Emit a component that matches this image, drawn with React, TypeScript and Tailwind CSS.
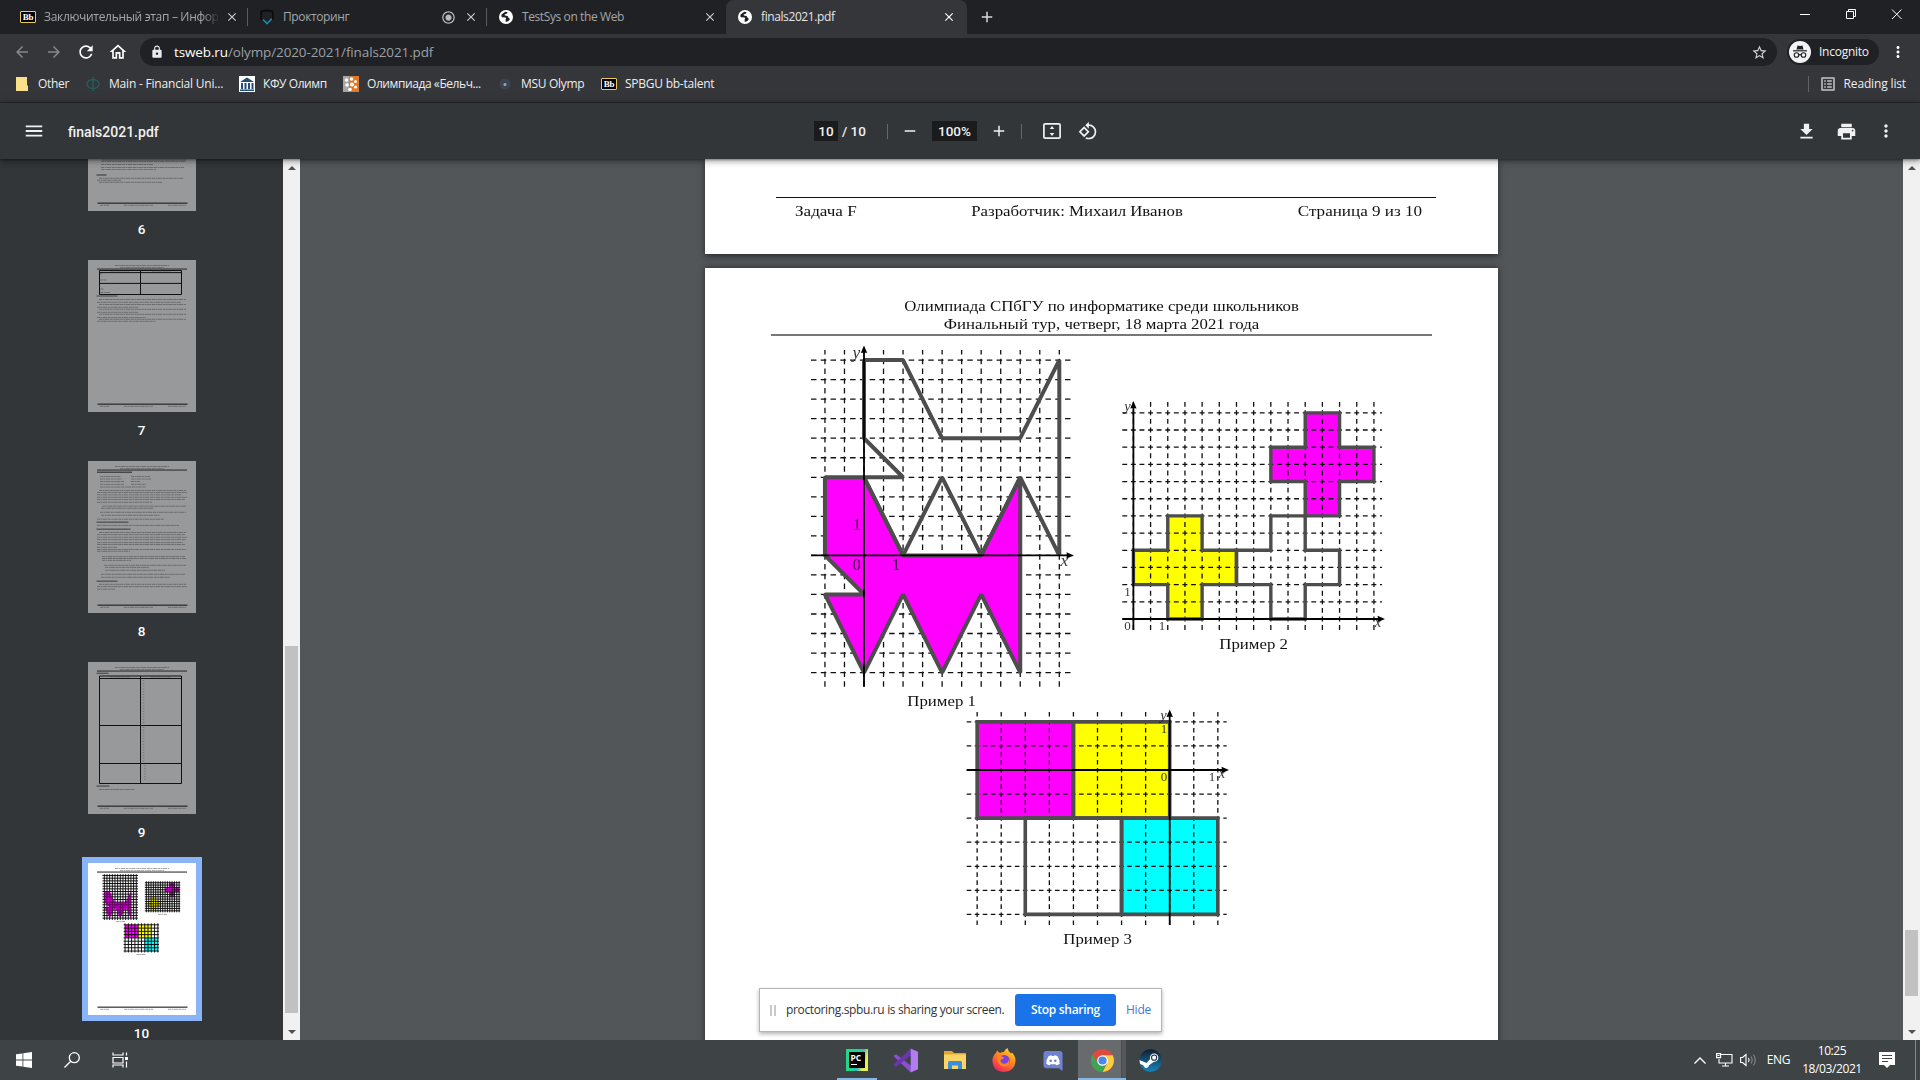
import React from "react";
import {
  MdAdd,
  MdArrowBack,
  MdArrowForward,
  MdClose,
  MdFileDownload,
  MdLock,
  MdMenu,
  MdMoreVert,
  MdOutlineHome,
  MdOutlineListAlt,
  MdPrint,
  MdRadioButtonChecked,
  MdRefresh,
  MdRemove,
  MdRotate90DegreesCcw,
  MdStarBorder,
} from "react-icons/md";

const UI = "font-['Open_Sans','Noto_Sans',sans-serif]";
const ROBOTO = "font-['Roboto',sans-serif]";
const SERIF = "font-['Liberation_Serif',serif]";

/* ---------- figures ---------- */

type Pt = [number, number];
type Shape = { pts: Pt[]; fill?: string };
type Label = { t: string; x: number; y: number; italic?: boolean };
type Fig = {
  ox: number;
  oy: number;
  g: number;
  nx: [number, number];
  ny: [number, number];
  ext: [number, number, number, number];
  arrow: [number, number];
  stroke: number;
  dash: string;
  gridOnTop: boolean;
  font: number;
  shapes: Shape[];
  labels: Label[];
};

const rect = (x1: number, y1: number, x2: number, y2: number): Pt[] => [[x1, y1], [x2, y1], [x2, y2], [x1, y2]];
const cross = (x: number, y: number): Pt[] => [
  [x + 2, y + 6], [x + 4, y + 6], [x + 4, y + 4], [x + 6, y + 4], [x + 6, y + 2], [x + 4, y + 2],
  [x + 4, y], [x + 2, y], [x + 2, y + 2], [x, y + 2], [x, y + 4], [x + 2, y + 4],
];

const FIG1: Fig = {
  ox: 864, oy: 555.4, g: 19.53, nx: [-2, 10], ny: [-6, 10],
  ext: [811, 350, 1071.7, 686.7], arrow: [1074, 345.5], stroke: 4, dash: "5.5 4.27", gridOnTop: false, font: 16,
  shapes: [
    { pts: [[0, 10], [2, 10], [4, 6], [8, 6], [10, 10], [10, 0], [8, 4], [6, 0], [4, 4], [2, 0], [0, 4], [2, 4], [0, 6]] },
    { fill: "#ff00ff", pts: [[-2, 4], [0, 4], [2, 0], [6, 0], [8, 4], [8, -6], [6, -2], [4, -6], [2, -2], [0, -6], [-2, -2], [0, -2], [-2, 0]] },
  ],
  labels: [
    { t: "y", x: 856.5, y: 358, italic: true }, { t: "x", x: 1064.5, y: 565.5, italic: true },
    { t: "0", x: 856.8, y: 569.5 }, { t: "1", x: 896, y: 569.5 }, { t: "1", x: 857, y: 530 },
  ],
};

const FIG2: Fig = {
  ox: 1133.4, oy: 619, g: 17.18, nx: [0, 14], ny: [0, 12],
  ext: [1122.3, 402, 1382, 630], arrow: [1385, 401], stroke: 3.4, dash: "4.9 3.69", gridOnTop: true, font: 13,
  shapes: [
    { pts: cross(6, 0) },
    { fill: "#ff00ff", pts: cross(8, 6) },
    { fill: "#ffff00", pts: cross(0, 0) },
  ],
  labels: [
    { t: "y", x: 1127.5, y: 410.5, italic: true }, { t: "x", x: 1378, y: 627, italic: true },
    { t: "0", x: 1127.6, y: 630 }, { t: "1", x: 1162, y: 630 }, { t: "1", x: 1127.5, y: 595.5 },
  ],
};

const FIG3: Fig = {
  ox: 1169.7, oy: 770, g: 24.07, nx: [-8, 2], ny: [-6, 2],
  ext: [966.7, 711, 1226.7, 925], arrow: [1229, 709.5], stroke: 3.6, dash: "4.6 3.42", gridOnTop: true, font: 13,
  shapes: [
    { pts: rect(-6, -2, -2, -6) },
    { fill: "#ff00ff", pts: rect(-8, 2, -4, -2) },
    { fill: "#ffff00", pts: rect(-4, 2, 0, -2) },
    { fill: "#00ffff", pts: rect(-2, -2, 2, -6) },
  ],
  labels: [
    { t: "y", x: 1163.5, y: 719.5, italic: true }, { t: "1", x: 1164, y: 732.5 }, { t: "0", x: 1164, y: 780.5 },
    { t: "1", x: 1212, y: 780.5 }, { t: "x", x: 1222, y: 777.5, italic: true },
  ],
};

const range = ([a, b]: [number, number]) => Array.from({ length: b - a + 1 }, (_, i) => a + i);

function Plot({ f, mini }: { f: Fig; mini?: boolean }) {
  const P = ([x, y]: Pt) => `${f.ox + x * f.g},${f.oy - y * f.g}`;
  const [x1, y1, x2, y2] = f.ext;
  const [ax, ay] = f.arrow;
  const grid = (
    <g stroke={mini ? "#0c0c0c" : "#111"} strokeWidth={mini ? 7 : 1.3} strokeDasharray={mini ? undefined : f.dash}>
      {range(f.nx).map((i) => (
        <line key={"v" + i} x1={f.ox + i * f.g} x2={f.ox + i * f.g} y1={y2} y2={y1} />
      ))}
      {range(f.ny).map((i) => (
        <line key={"h" + i} x1={x1} x2={x2} y1={f.oy - i * f.g} y2={f.oy - i * f.g} />
      ))}
    </g>
  );
  return (
    <g>
      {(!f.gridOnTop && !mini) && grid}
      {f.shapes.map((s, i) => (
        <polygon key={i} points={s.pts.map(P).join(" ")} fill={s.fill ?? "none"} />
      ))}
      {(f.gridOnTop || mini) && grid}
      {!mini && f.shapes.map((s, i) => (
        <polygon key={i} points={s.pts.map(P).join(" ")} fill="none" stroke="#4d4d4d" strokeWidth={f.stroke} strokeLinejoin={f.gridOnTop ? "miter" : "bevel"} />
      ))}
      {mini && !f.gridOnTop && <polygon points={f.shapes[1].pts.map(P).join(" ")} fill="#a0009a" opacity=".5" />}
      {!mini && (
        <g>
          <g stroke="#000" strokeWidth="1.8">
            <line x1={x1} x2={ax - 4} y1={f.oy} y2={f.oy} />
            <line x1={f.ox} x2={f.ox} y1={y2} y2={ay + 4} />
          </g>
          <path d={`M${ax} ${f.oy}l-7.5 -3.2q1 3.2 0 6.4z`} />
          <path d={`M${f.ox} ${ay}l-3.2 7.5q3.2 -1 6.4 0z`} />
          {f.labels.map((l, i) => (
            <text key={i} x={l.x} y={l.y} fontSize={l.italic ? f.font + 1.5 : f.font} fontStyle={l.italic ? "italic" : "normal"} textAnchor="middle" fill="#111" opacity=".85">
              {l.t}
            </text>
          ))}
        </g>
      )}
    </g>
  );
}

/* ---------- page thumbnails ---------- */

function TextRows({ rows }: { rows: [number, number, number][] }) {
  return (
    <g stroke="#333" strokeWidth=".9" opacity=".48" strokeDasharray="3.1 .5 1.7 .4 4.3 .6">
      {rows.map(([x, y, w], i) => (
        <line key={i} x1={x} x2={x + w} y1={y} y2={y} />
      ))}
    </g>
  );
}

function PageFrame({ children }: { children?: React.ReactNode }) {
  return (
    <svg viewBox="0 0 108 152" className="block h-[152px] w-[108px] shrink-0">
      <TextRows rows={[[27, 5.5, 54], [32, 7.6, 44], [12, 146.3, 9], [36, 146.3, 29], [80, 146.3, 18]]} />
      <rect x="9" y="8.5" width="90" height="1.1" fill="#333" />
      <rect x="9.5" y="143.6" width="90" height="1.1" fill="#1c1c1c" />
      {children}
    </svg>
  );
}

const T6: [number, number, number][] = [[14, 101, 84], [13, 102.4, 85], [13, 105.5, 52], [13, 108.5, 83], [13, 110.5, 55], [11, 119.3, 85], [9, 121.3, 24], [11, 123.3, 63]];
const T7: [number, number, number][] = [[11, 39.5, 87], [9, 42.3, 84], [11, 44.5, 87], [9, 47.3, 41], [11, 49.3, 87], [9, 52.3, 41], [11, 54.3, 87], [9, 57.5, 49], [11, 59.3, 87], [9, 61.3, 59], [12, 14, 2], [12, 20, 7], [12, 29, 4], [12, 32.5, 10], [23, 11, 18], [64, 11, 19]];
const T8: [number, number, number][] = [
  [12, 15.5, 21], [43, 15.5, 19], [12, 18, 22], [43, 18, 20], [12, 20.5, 24], [43, 20.5, 9], [12, 23.3, 24], [43, 23.3, 15], [12, 26, 46],
  [11, 29.5, 87], [9, 31.5, 90], [9, 33.8, 84], [9, 36.3, 90], [9, 38.5, 88], [9, 41.3, 55],
  [14, 45.2, 84], [13, 47.3, 52], [12, 51.3, 86], [13, 54.3, 59], [9, 58.2, 67], [9, 64.4, 82],
  [11, 71.5, 87], [9, 73.6, 88], [9, 76.3, 90], [9, 78.6, 89], [9, 81.6, 86], [9, 83.5, 88], [9, 86.3, 20], [9, 88.5, 89], [9, 90.3, 33],
  [14, 95.6, 83], [14, 97.5, 84], [14, 99.4, 29], [16, 104.3, 82], [17, 106.4, 44], [17, 109.3, 60], [13, 113.3, 84], [13, 116.3, 69], [11, 123.3, 87], [9, 125.6, 90], [9, 128.2, 18],
];

function Thumb({ n, active, children }: { n: number; active?: boolean; children?: React.ReactNode }) {
  return (
    <div className="flex w-full shrink-0 flex-col items-center">
      <div className={active ? "-my-[6px] shrink-0 border-[6px] border-[#8ab4f8] bg-white" : "shrink-0 bg-[#98999b]"}>
        <PageFrame>{children}</PageFrame>
      </div>
      <div className={`${ROBOTO} flex h-[37px] items-center text-[13.5px] font-medium text-white`}>{n}</div>
      <div className="h-[12px]" />
    </div>
  );
}

function Sidebar() {
  return (
    <div className="flex h-full w-[300px] shrink-0 bg-[#323639]">
      <div className="flex min-w-0 flex-1 flex-col justify-start overflow-hidden">
        <div className="-mt-[100px] flex flex-col items-center">
          <Thumb n={6}>
            <TextRows rows={T6} />
            <rect x="8.5" y="115.4" width="10" height="1.2" fill="#444" />
          </Thumb>
          <Thumb n={7}>
            <g fill="none" stroke="#111" strokeWidth="1">
              <path d="M11.5 10.5h82v24h-82zM11.5 12.6h82M11.5 23.4h82M52.5 10.5v24" />
            </g>
            <rect x="8.5" y="35.5" width="21" height="1" fill="#444" />
            <TextRows rows={T7} />
          </Thumb>
          <Thumb n={8}>
            <rect x="9" y="10.6" width="35" height="1.2" fill="#333" />
            <rect x="8.5" y="60.6" width="32" height="1.1" fill="#444" />
            <rect x="8.5" y="67.6" width="34" height="1.1" fill="#444" />
            <rect x="8.5" y="119.6" width="21" height="1.1" fill="#444" />
            <TextRows rows={T8} />
          </Thumb>
          <Thumb n={9}>
            <rect x="8.5" y="10.7" width="12" height="1.1" fill="#444" />
            <g fill="none" stroke="#111" strokeWidth="1">
              <path d="M11.5 14h82v107.5h-82zM11.5 16.5h82M11.5 63.5h82M11.5 101.5h82M52.5 14v107.5" />
            </g>
            <path d="M55.5 18v44M55.5 65v35M57 103v16" stroke="#444" strokeWidth="1.6" strokeDasharray="1 1.8" opacity=".4" />
            <rect x="8.5" y="123.5" width="13" height="1.1" fill="#444" />
            <TextRows rows={[[11, 127.5, 36], [22, 14.9, 20], [63, 14.9, 20]]} />
          </Thumb>
          <Thumb n={10} active>
            <g transform="scale(.1362) translate(-705 -268)">
              <Plot f={FIG1} mini />
              <Plot f={FIG2} mini />
              <Plot f={FIG3} mini />
            </g>
            <TextRows rows={[[28, 58.5, 9], [70, 51.3, 9], [48.5, 91.5, 9]]} />
          </Thumb>
        </div>
      </div>
      <Scrollbar top={470} height={367} />
    </div>
  );
}

function Scrollbar({ top, height }: { top: number; height: number }) {
  return (
    <div className="flex h-full w-[17px] shrink-0 flex-col items-center bg-[#f1f1f1]">
      <div className="flex h-[17px] items-center">
        <svg width="8" height="4"><path d="M0 4L4 0L8 4z" fill="#505050" /></svg>
      </div>
      <div className="w-[13px] bg-[#c1c1c1]" style={{ marginTop: top, height }} />
      <div className="mt-auto flex h-[17px] items-center">
        <svg width="8" height="4"><path d="M0 0L4 4L8 0z" fill="#505050" /></svg>
      </div>
    </div>
  );
}

/* ---------- browser chrome ---------- */

function BbIcon() {
  return (
    <span className="flex h-[12px] w-[16px] shrink-0 items-center justify-center rounded-[1px] border border-[#e8c95a] bg-black font-['Liberation_Serif',serif] text-[9px] leading-none font-bold tracking-[-0.2px] text-white">
      Bb
    </span>
  );
}

function Globe() {
  return (
    <svg viewBox="0 0 14 14" className="h-[14px] w-[14px] shrink-0">
      <circle cx="7" cy="7" r="7" fill="#fff" />
      <path d="M6.2 1.8L2.6 4.6Q1.8 6.8 3 7.2L6.6 7.6Q7.6 8.6 6.6 9.4L6.8 12Q10 11.6 11 9L9.4 7.6L8.6 6L6 5.6L5.6 4.4L8 3.6L8.6 2.2z" fill="#202124" />
    </svg>
  );
}

function Tabs() {
  return (
    <div className={`${UI} flex h-[34px] bg-[#202124] text-[12px] text-[#a3a7ac]`}>
      <div className="flex h-full w-[247px] items-center pl-[20px]">
        <BbIcon />
        <span className="ml-2 w-[176px] overflow-hidden tracking-[-0.32px] whitespace-nowrap [mask-image:linear-gradient(to_right,#000_90%,transparent)]">
          Заключительный этап – Информатика
        </span>
        <MdClose className="ml-[5px] text-[14px] text-[#c8cbce]" />
      </div>
      <div className="my-[8px] w-px bg-[#5a5c60]" />
      <div className="flex h-full w-[238px] items-center pl-[12px]">
        <svg viewBox="0 0 14 16" className="h-[16px] w-[14px]">
          <path d="M1.2 11V2.5Q7 .5 12.8 2.5V11" fill="none" stroke="#0c0d0e" strokeWidth="1.8" />
          <path d="M3 10.5L7 14.6L11.8 9.8" fill="none" stroke="#1f8aa6" strokeWidth="1.6" />
        </svg>
        <span className="ml-[9px] w-[158px] tracking-[-0.38px]">Прокторинг</span>
        <MdRadioButtonChecked className="text-[15px] text-[#b8bbbe]" />
        <MdClose className="ml-[8px] text-[14px] text-[#c8cbce]" />
      </div>
      <div className="my-[8px] w-px bg-[#5a5c60]" />
      <div className="flex h-full w-[236px] items-center pl-[12px]">
        <Globe />
        <span className="ml-[9px] w-[181px] tracking-[-0.4px]">TestSys on the Web</span>
        <MdClose className="text-[14px] text-[#c8cbce]" />
      </div>
      <div className="flex h-full w-[244px] items-end">
        <div className="h-full w-[3px] bg-[#202124]" />
        <div className="flex h-full w-[241px] items-center rounded-t-[8px] bg-[#35363a] pl-[12px] text-[#e4e6e9]">
          <Globe />
          <span className="ml-[9px] w-[181px] tracking-[-0.4px]">finals2021.pdf</span>
          <MdClose className="text-[14px] text-white" />
        </div>
      </div>
      <MdAdd className="mt-[8px] ml-[11px] text-[18px] text-[#d5d7da]" />
      <div className="mr-[18px] ml-auto flex items-start pt-[9px]">
        <svg width="102" height="11" viewBox="0 0 102 11" fill="none" stroke="#fff">
          <path d="M0 5.5h10M46.5 2.5h7v7h-7zM48.5 2.5v-2h7v7h-2M92 .5l9.5 9.5M101.500 .5l-9.500 9.500" />
        </svg>
      </div>
    </div>
  );
}

function AddressRow() {
  return (
    <div className={`${UI} flex h-[36px] items-center bg-[#35363a]`}>
      <MdArrowBack className="ml-[13px] text-[18px] text-[#85878a]" />
      <MdArrowForward className="ml-[14px] text-[18px] text-[#85878a]" />
      <MdRefresh className="ml-[13px] text-[20px] text-white" />
      <MdOutlineHome className="ml-[12px] text-[20px] text-white" />
      <div className="ml-[12px] flex h-[28px] w-[1637px] items-center rounded-full bg-[#202124] text-[13.5px]">
        <MdLock className="ml-[10px] text-[14px] text-[#e8eaed]" />
        <span className="ml-[10px] tracking-[-0.12px] text-[#9aa0a6]">
          <span className="text-white">tsweb.ru</span>/olymp/2020-2021/finals2021.pdf
        </span>
        <MdStarBorder className="mr-[9px] ml-auto text-[17px] text-[#d0d2d5]" />
      </div>
      <div className="ml-[10px] flex h-[26px] w-[92px] items-center rounded-full bg-[#202124] pl-[2px] text-[12px] text-[#f1f3f4]">
        <svg viewBox="0 0 22 22" className="h-[22px] w-[22px]">
          <circle cx="11" cy="11" r="11" fill="#f1f3f4" />
          <path d="M7.500 8.500L8.500 4.500Q11 5.300 13.500 4.500L14.500 8.500z" fill="#202124" />
          <path d="M4 9.800h14" stroke="#202124" strokeWidth="1.200" />
          <g fill="none" stroke="#202124" strokeWidth="1.100"><circle cx="7.500" cy="14" r="2.300" /><circle cx="14.500" cy="14" r="2.300" /><path d="M9.800 14q1.200-.8 2.400 0" /></g>
        </svg>
        <span className="ml-[8px] tracking-[-0.25px]">Incognito</span>
      </div>
      <MdMoreVert className="ml-[10px] text-[18px] text-white" />
    </div>
  );
}

function Bookmarks() {
  return (
    <div className={`${UI} flex h-[33px] items-center border-b border-[#27282b] bg-[#35363a] pb-[4px] text-[12px] whitespace-nowrap text-[#eceef0]`}>
      <svg viewBox="0 0 12 14" className="ml-[16px] h-[14px] w-[12px]"><path d="M0 0h11v8l1 1v5H0z" fill="#fbe08c" /></svg>
      <span className="ml-[10px] w-[48px] tracking-[-0.3px]">Other</span>
      <svg viewBox="0 0 14 14" className="h-[14px] w-[14px]" fill="none" stroke="#255b5c" strokeWidth="1.500"><ellipse cx="7" cy="7" rx="6" ry="4.600" /><path d="M7 0v14" /></svg>
      <span className="ml-[9px] w-[130px] tracking-[-0.2px]">Main - Financial Uni...</span>
      <svg viewBox="0 0 16 16" className="h-[16px] w-[16px]">
        <path d="M0 0h16v16H0z" fill="#fff" />
        <path d="M1 6L8 1.500L15 6zM2 7h2v6H2zM5.500 7h2v6h-2zM9 7h2v6H9zM12.500 7h2v6h-2zM1 13.500h14V15H1z" fill="#1d4d78" />
      </svg>
      <span className="ml-[8px] w-[80px] tracking-[-0.42px]">КФУ Олимп</span>
      <svg viewBox="0 0 16 16" className="h-[16px] w-[16px]">
        <path d="M0 0h8v16H0z" fill="#a9a6a6" /><path d="M6 0h10v16H6z" fill="#e07a26" />
        <g fill="#fff"><circle cx="3.500" cy="4" r="1.800" /><circle cx="8.500" cy="3" r="1.800" /><circle cx="12.500" cy="5.500" r="1.500" /><circle cx="4" cy="9" r="1.800" /><circle cx="9" cy="8.500" r="2" /><circle cx="12.500" cy="11" r="1.500" /><circle cx="7" cy="13.500" r="1.800" /></g>
      </svg>
      <span className="ml-[8px] w-[131px] tracking-[-0.42px]">Олимпиада «Бельч...</span>
      <svg viewBox="0 0 14 14" className="h-[14px] w-[14px]"><circle cx="7" cy="7" r="5.500" fill="#3b4552" /><circle cx="7" cy="7.500" r="1.500" fill="#9aa3ad" /></svg>
      <span className="ml-[9px] w-[80px] tracking-[-0.3px]">MSU Olymp</span>
      <BbIcon />
      <span className="ml-[8px] tracking-[-0.25px]">SPBGU bb-talent</span>
      <div className="ml-auto h-[16px] w-px bg-[#5f6165]" />
      <MdOutlineListAlt className="ml-[10px] text-[18px] text-[#c4c6c9]" />
      <span className="mr-[14px] ml-[7px] tracking-[-0.15px]">Reading list</span>
    </div>
  );
}

function PdfToolbar() {
  return (
    <div className={`${ROBOTO} z-10 flex h-[56px] items-center bg-[#323639] text-[14px] font-medium text-[#f1f1f1] shadow-[0_-2px_8px_rgba(0,0,0,.09),0_4px_8px_rgba(0,0,0,.06),0_1px_2px_rgba(0,0,0,.3),0_2px_6px_rgba(0,0,0,.3)]`}>
      <MdMenu className="ml-[23px] text-[22px]" />
      <span className="ml-[23px] w-[746px] pt-[2px] text-[14px]">finals2021.pdf</span>
      <span className="flex h-[20px] w-[24px] items-center justify-center bg-[#191b1c] text-[13.500px]">10</span>
      <span className="ml-[4px] w-[45px] text-[13.500px]">/ 10</span>
      <div className="h-[15px] w-px bg-[#66696c]" />
      <MdRemove className="ml-[13px] text-[18px]" />
      <span className="ml-[13px] flex h-[20px] w-[45px] items-center justify-center bg-[#191b1c] text-[13.500px]">100%</span>
      <MdAdd className="ml-[13px] text-[18px]" />
      <div className="ml-[13px] h-[15px] w-px bg-[#66696c]" />
      <svg viewBox="0 0 18 16" className="ml-[21px] h-[16px] w-[18px]">
        <rect x=".9" y=".9" width="16.200" height="14.200" rx="1.200" fill="none" stroke="#f1f1f1" strokeWidth="1.700" />
        <path d="M9 3L11.300 6H6.700zM9 13L11.300 10H6.700z" fill="#f1f1f1" />
      </svg>
      <MdRotate90DegreesCcw className="ml-[17px] text-[20px]" />
      <MdFileDownload className="ml-auto text-[21px]" />
      <MdPrint className="ml-[19px] text-[21px]" />
      <MdMoreVert className="mr-[24px] ml-[19px] text-[20px]" />
    </div>
  );
}

/* ---------- document ---------- */

const CAPTION = "flex h-[20px] scale-x-112 items-center text-[15px]";

function Viewer() {
  return (
    <div className="flex min-w-0 flex-1 flex-col overflow-hidden pl-[405px]">
      <div className={`${SERIF} h-[95px] w-[793px] shrink-0 bg-white pt-[38px] text-[15px] text-[#111] shadow-[0_2px_6px_rgba(0,0,0,.5)]`}>
        <div className="ml-[71px] h-px w-[660px] bg-[#111]" />
        <div className="ml-[90px] flex h-[27px] w-[627px] items-center justify-between">
          <span className="origin-left scale-x-114">Задача F</span>
          <span className="scale-x-112 pr-[7px]">Разработчик: Михаил Иванов</span>
          <span className="origin-right scale-x-114">Страница 9 из 10</span>
        </div>
      </div>
      <div className={`${SERIF} mt-[14px] h-[1122px] w-[793px] shrink-0 bg-white pt-[29px] text-[15px] text-[#111] shadow-[0_0_6px_rgba(0,0,0,.5)]`}>
        <div className="flex scale-x-112 flex-col items-center leading-[18px]">
          <span>Олимпиада СПбГУ по информатике среди школьников</span>
          <span>Финальный тур, четверг, 18 марта 2021 года</span>
        </div>
        <div className="mt-[1px] ml-[66px] h-[2px] w-[661px] bg-[#77777a]" />
        <div className="mt-[4px] ml-[98px] flex items-start">
          <div className="flex w-[277px] flex-col items-center">
            <svg viewBox="803 340 277 352" className="h-[352px] w-[277px]"><Plot f={FIG1} /></svg>
            <div className="flex h-[19px] scale-x-112 items-center">Пример 1</div>
          </div>
          <div className="mt-[56px] ml-[34px] flex w-[280px] flex-col items-center">
            <svg viewBox="1114 396 280 238" className="h-[238px] w-[280px]"><Plot f={FIG2} /></svg>
            <div className={CAPTION}>Пример 2</div>
          </div>
        </div>
        <div className="ml-[253px] flex w-[280px] flex-col items-center">
          <svg viewBox="958 711 280 218" className="h-[218px] w-[280px] overflow-visible"><Plot f={FIG3} /></svg>
          <div className={CAPTION}>Пример 3</div>
        </div>
      </div>
    </div>
  );
}

function SharePopup() {
  return (
    <div className={`${UI} absolute top-[988px] left-[759px] z-20 flex h-[44px] w-[403px] items-center border border-[#b5b5b5] bg-white text-[12px] shadow-[0_2px_4px_rgba(0,0,0,.3)]`}>
      <div className="ml-[10px] flex gap-[2px]">
        <div className="h-[11px] w-[2px] bg-[#c9c9c9]" />
        <div className="h-[11px] w-[2px] bg-[#c9c9c9]" />
      </div>
      <span className="ml-[10px] w-[229px] tracking-[-0.36px] whitespace-nowrap text-[#333]">proctoring.spbu.ru is sharing your screen.</span>
      <span className="flex h-[32px] w-[101px] items-center justify-center rounded-[3px] bg-[#1a73e8] font-semibold tracking-[-0.3px] text-white">Stop sharing</span>
      <span className="ml-[10px] tracking-[-0.25px] text-[#3f7ad6]">Hide</span>
    </div>
  );
}

/* ---------- taskbar ---------- */

function PyCharm() {
  return (
    <div className="flex h-[22px] w-[22px] items-center justify-center bg-[linear-gradient(110deg,#21d789_45%,#3fb0c8_60%,#e8f04a_80%)]">
      <div className="flex h-[16px] w-[16px] flex-col bg-black pt-px pl-[2px] font-['Open_Sans',sans-serif] text-[8.500px] leading-[10px] font-bold text-white">
        PC
        <div className="mt-px h-px w-[6px] bg-white" />
      </div>
    </div>
  );
}

function VisualStudio() {
  return (
    <svg viewBox="0 0 24 24" className="h-[25px] w-[25px]">
      <path d="M1 7L3 6L18 17.500V23L16.500 23L1 8.500z" fill="#8a4fd0" />
      <path d="M1 17L3 18L18 6.500V1L16.500 1L1 15.500z" fill="#6a35ad" />
      <path d="M17 .5L24 3.500V20.500L17 23.500z" fill="#b07cf0" />
    </svg>
  );
}

function Folder() {
  return (
    <svg viewBox="0 0 22 18" className="h-[18px] w-[22px]">
      <path d="M0 0h8l2 2h12v4H0z" fill="#e3a62b" />
      <path d="M0 3.500h22V18H0z" fill="#fbd367" />
      <path d="M4 18V11.500Q4 10 5.500 10h11Q18 10 18 11.500V18h-4v-3.500H8V18z" fill="#3c8fd6" />
    </svg>
  );
}

function Firefox() {
  return (
    <svg viewBox="0 0 24 24" className="h-[24px] w-[24px]">
      <defs>
        <linearGradient id="ff" x1=".9" y1="0" x2=".3" y2="1"><stop offset="0" stopColor="#ffe226" /><stop offset=".45" stopColor="#ff8a1e" /><stop offset="1" stopColor="#f0245e" /></linearGradient>
      </defs>
      <path d="M4 5L5 2.500Q6.500 4 8 5Q10.500 3.500 12 4Q12.500 1.500 15.500 0Q16 3 19 5.500L20 4.500Q24 9 23.500 13.500Q22.500 23.500 12 24Q.8 23.500.4 12.500Q.5 8 4 5z" fill="url(#ff)" />
      <circle cx="12.200" cy="12.500" r="5.500" fill="#7a42d8" />
      <path d="M5 8.500Q9 7 12 9.500Q11.500 11.500 8.500 11.700Q8.500 15.500 12.500 15.700Q16 15.500 16.500 12Q18 14 16.500 17Q13 20 8.500 17.500Q5 14 5 8.500z" fill="#ff8420" />
    </svg>
  );
}

function Discord() {
  return (
    <svg viewBox="0 0 20 22" className="h-[21px] w-[20px]">
      <path d="M3 1h14q3 0 3 3v18l-4-3H3q-3 0-3-3V4q0-3 3-3z" fill="#6f82cf" />
      <path d="M3 14.500Q3 9.500 5.300 6.500Q7 5.500 8.300 5.500L8.800 6.300H11.200L11.700 5.500Q13 5.500 14.700 6.500Q17 9.500 17 14.500Q15.500 16 13.500 16L12.600 14.800H7.400L6.500 16Q4.500 16 3 14.500z" fill="#fff" />
      <circle cx="7.600" cy="11.300" r="1.400" fill="#6f82cf" /><circle cx="12.400" cy="11.300" r="1.400" fill="#6f82cf" />
    </svg>
  );
}

function Chrome() {
  return (
    <svg viewBox="0 0 24 24" className="h-[23px] w-[23px]">
      <circle cx="12" cy="12" r="12" fill="#de4b3c" />
      <path d="M12 6.600H22.650A12 12 0 0 1 12 24L16.800 14.700z" fill="#fccd42" />
      <path d="M1.600 6A12 12 0 0 0 12 24L16.800 14.700H7.200z" fill="#3da556" />
      <circle cx="12" cy="12" r="5.500" fill="#fff" /><circle cx="12" cy="12" r="4.300" fill="#4a86ec" />
    </svg>
  );
}

function Steam() {
  return (
    <svg viewBox="0 0 24 24" className="h-[23px] w-[23px]">
      <defs><linearGradient id="st" x1="0" y1="0" x2="0" y2="1"><stop offset="0" stopColor="#111d2e" /><stop offset="1" stopColor="#1585bd" /></linearGradient></defs>
      <circle cx="12" cy="12" r="11.700" fill="url(#st)" />
      <path d="M.4 11.500L8 14.500L12.500 9.500L16 13L10.500 17Q9.500 20.500 6.500 19.500Q5 19 4.500 17L1.200 15.600z" fill="#fff" />
      <circle cx="15.800" cy="9" r="4.400" fill="#fff" /><circle cx="15.800" cy="9" r="2.700" fill="none" stroke="#16293f" strokeWidth="1.100" />
    </svg>
  );
}

const SLOT = "flex h-full w-[49px] items-center justify-center";

function Taskbar() {
  return (
    <div className={`${UI} flex h-[40px] shrink-0 items-center bg-[#3e4346] text-white`}>
      <div className="flex w-[832px] items-center">
        <svg viewBox="0 0 16 16" className="ml-[16px] h-[16px] w-[16px]"><path d="M0 2.300L6.500 1.400V7.600H0zM7.300 1.300L16 0V7.600H7.300zM0 8.400H6.500V14.600L0 13.700zM7.300 8.400H16V16L7.300 14.700z" fill="#fff" /></svg>
        <svg viewBox="0 0 16 16" className="ml-[32px] h-[16px] w-[16px]" fill="none" stroke="#fff" strokeWidth="1.300"><circle cx="10.300" cy="5.700" r="5" /><path d="M6.700 9.300L.5 15.500" /></svg>
        <svg viewBox="0 0 17 16" className="ml-[32px] h-[16px] w-[17px]" fill="none" stroke="#fff" strokeWidth="1.200"><path d="M1 .5v2.500h10V.5M1 15.500V13h10v2.500M1 5.500h10v5.500H1zM14.500 .5v3M14.500 9.500v6" /><path d="M13 5h3v3h-3z" fill="#fff" stroke="none" /></svg>
      </div>
      <div className="flex h-full w-[49px] flex-col items-center">
        <div className="flex h-[38px] items-center pt-[2px]"><PyCharm /></div>
        <div className="h-[2px] w-[40px] bg-[#85b9e4]" />
      </div>
      <div className={SLOT}><VisualStudio /></div>
      <div className={SLOT}><Folder /></div>
      <div className={SLOT}><Firefox /></div>
      <div className={SLOT}><Discord /></div>
      <div className="ml-px flex h-full w-[48px] border-b-2 border-[#85b9e4] bg-[#54585b]">
        <div className="flex w-[44px] items-center justify-center border-r border-[#474b4e] bg-[#686b6d] pt-[2px] pl-[5px]"><Chrome /></div>
      </div>
      <div className={SLOT}><Steam /></div>
      <div className="ml-auto flex h-full items-center text-[12px]">
        <svg width="12" height="7" fill="none" stroke="#fff" strokeWidth="1.300"><path d="M.5 6.500L6 1L11.500 6.500" /></svg>
        <svg width="17" height="14" viewBox="0 0 17 14" className="ml-[10px]" fill="none" stroke="#fff" strokeWidth="1.100"><path d="M5 1.500h11v8.500H3V6M9.500 10v3M6 13h7M.6 .6h4v4h-4zM1.500 2.500h2" /></svg>
        <svg width="17" height="14" viewBox="0 0 17 14" className="ml-[7px]" fill="none" stroke="#fff" strokeWidth="1.100"><path d="M.6 4.500h2L6 1.500v11L2.600 9.500h-2zM8.500 5q1.300 2 0 4" /><path d="M11 3.500q2.300 3.500 0 7M13.500 1.500q3.500 5.500 0 11" stroke="#85888a" /></svg>
        <span className="ml-[10px] tracking-[-0.4px]">ENG</span>
        <div className="ml-[12px] flex w-[60px] flex-col items-center leading-[18px] tracking-[-0.4px]">
          <span>10:25</span>
          <span>18/03/2021</span>
        </div>
        <svg width="16" height="16" viewBox="0 0 16 16" className="ml-[17px]"><path d="M0 0h16v13h-5l-3 3l-3-3H0z" fill="#fff" /><path d="M3 3.500h10M3 6.500h10M3 9.500h6" stroke="#3e4346" /></svg>
        <div className="ml-[20px] h-full w-px bg-[#85888a]" />
        <div className="w-[4px]" />
      </div>
    </div>
  );
}

export default function App() {
  return (
    <div className="relative flex h-[1080px] w-[1920px] flex-col overflow-hidden bg-[#525659]">
      <Tabs />
      <AddressRow />
      <Bookmarks />
      <PdfToolbar />
      <div className="flex h-[881px] shrink-0">
        <Sidebar />
        <Viewer />
        <Scrollbar top={754} height={66} />
      </div>
      <Taskbar />
      <SharePopup />
    </div>
  );
}
